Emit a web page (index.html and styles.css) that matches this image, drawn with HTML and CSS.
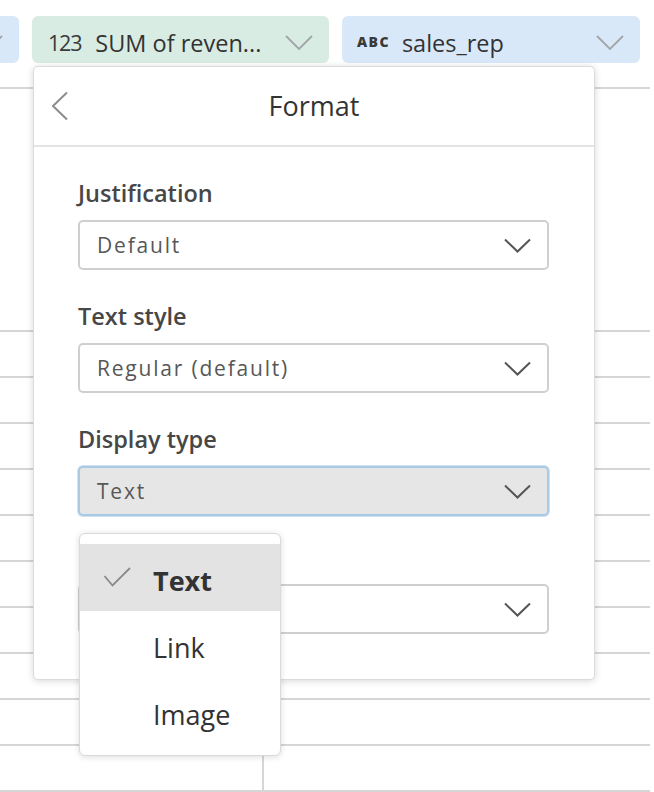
FILE: index.html
```html
<!DOCTYPE html>
<html lang="en">
<head>
<meta charset="utf-8">
<title>Format</title>
<link rel="stylesheet" href="styles.css">
</head>
<body>
<div class="page">
  <div class="toolbar">
    <div class="pill pill-blue pill-cut">
      <svg class="pill-chevron" width="28" height="15" viewBox="0 0 28 15"><polyline points="1,1 14,14 27,1"/></svg>
    </div>
    <div class="pill pill-green">
      <span class="type-num">123</span>
      <span class="pill-label">SUM of reven...</span>
      <svg class="pill-chevron" width="28" height="15" viewBox="0 0 28 15"><polyline points="1,1 14,14 27,1"/></svg>
    </div>
    <div class="pill pill-blue pill-wide">
      <span class="type-abc">ABC</span>
      <span class="pill-label">sales_rep</span>
      <svg class="pill-chevron" width="28" height="15" viewBox="0 0 28 15"><polyline points="1,1 14,14 27,1"/></svg>
    </div>
  </div>

  <div class="table">
    <div class="row row-head"></div>
    <div class="row"></div>
    <div class="row"></div>
    <div class="row"></div>
    <div class="row"></div>
    <div class="row"></div>
    <div class="row"></div>
    <div class="row"></div>
    <div class="row"></div>
    <div class="row"></div>
    <div class="row row-split"><div class="cell cell-first"></div><div class="cell"></div></div>
  </div>

  <div class="popover">
    <div class="popover-header">
      <svg class="back" width="18" height="30" viewBox="0 0 18 30"><polyline points="16,1.5 2,15 16,28.5"/></svg>
      <div class="popover-title">Format</div>
      <div></div>
    </div>
    <div class="popover-body">
      <div class="field">
        <div class="field-label">Justification</div>
        <div class="select">
          <span class="select-value">Default</span>
          <svg class="select-chevron" width="27" height="15" viewBox="0 0 27 15"><polyline points="1,1.5 13.5,13.5 26,1.5"/></svg>
        </div>
      </div>
      <div class="field">
        <div class="field-label">Text style</div>
        <div class="select">
          <span class="select-value">Regular (default)</span>
          <svg class="select-chevron" width="27" height="15" viewBox="0 0 27 15"><polyline points="1,1.5 13.5,13.5 26,1.5"/></svg>
        </div>
      </div>
      <div class="field field-open">
        <div class="field-label">Display type</div>
        <div class="select select-active">
          <span class="select-value">Text</span>
          <svg class="select-chevron" width="27" height="15" viewBox="0 0 27 15"><polyline points="1,1.5 13.5,13.5 26,1.5"/></svg>
        </div>
        <div class="menu">
          <div class="menu-item menu-item-selected">
            <svg class="check" width="28" height="20" viewBox="0 0 28 20"><polyline points="1.5,9 9.5,18.5 27,1"/></svg>
            <span>Text</span>
          </div>
          <div class="menu-item"><span></span><span>Link</span></div>
          <div class="menu-item"><span></span><span>Image</span></div>
        </div>
      </div>
      <div class="field field-last">
        <div class="field-label"></div>
        <div class="select">
          <span class="select-value"></span>
          <svg class="select-chevron" width="27" height="15" viewBox="0 0 27 15"><polyline points="1,1.5 13.5,13.5 26,1.5"/></svg>
        </div>
      </div>
    </div>
  </div>
</div>
</body>
</html>
```

FILE: styles.css
```css
* {
  box-sizing: border-box;
}

html, body {
  margin: 0;
  padding: 0;
  background: #ffffff;
  overflow: hidden;
}

body {
  font-family: "Open Sans", "Noto Sans", sans-serif;
  color: #333333;
}

.page {
  position: relative;
  width: 654px;
  height: 792px;
  overflow: hidden;
}

/* ---------- toolbar pills ---------- */
.toolbar {
  display: flex;
  gap: 13px;
  padding-top: 16px;
}

.pill {
  height: 47px;
  border-radius: 6px;
  display: flex;
  align-items: center;
  padding: 6px 16px 0 15px;
  flex: none;
}

.pill-blue {
  background: #d9e8f9;
}

.pill-green {
  background: #d8ece4;
  width: 297px;
  padding-left: 16px;
}

.pill-cut {
  width: 60px;
  margin-left: -41px;
  justify-content: flex-end;
}

.pill-wide {
  width: 298px;
  padding-left: 15px;
}

.pill-chevron {
  margin-left: auto;
  flex: none;
}

.pill-chevron polyline {
  fill: none;
  stroke: #a2a5a8;
  stroke-width: 1.8;
}

.type-num {
  font-size: 21.5px;
  line-height: 30px;
  letter-spacing: -1.2px;
  color: #3a3a3a;
  margin-right: 14px;
}

.type-abc {
  font-size: 14px;
  font-weight: 800;
  letter-spacing: 1.4px;
  color: #3a3a3a;
  margin-right: 12px;
  line-height: 30px;
  position: relative;
  top: -1px;
}

.pill-label {
  font-size: 23.5px;
  line-height: 30px;
  color: #333;
  white-space: nowrap;
}

/* ---------- background table ---------- */
.table {
  margin-top: 24px;
  width: 650px;
  border-top: 2px solid #d6d6d6;
}

.row {
  height: 46px;
  border-bottom: 2px solid #d6d6d6;
}

.row-head {
  height: 243px;
}

.row-split {
  display: flex;
}

.cell-first {
  width: 264px;
  border-right: 2px solid #d6d6d6;
}

/* ---------- popover ---------- */
.popover {
  position: absolute;
  left: 33px;
  top: 66px;
  width: 562px;
  background: #ffffff;
  border: 1px solid #dcdcdc;
  border-radius: 5px;
  box-shadow: 0 1px 7px rgba(0, 0, 0, 0.16);
}

.popover-header {
  height: 80px;
  border-bottom: 2px solid #e4e4e4;
  display: grid;
  grid-template-columns: 1fr auto 1fr;
  align-items: center;
  padding: 0 17px;
}

.back polyline {
  fill: none;
  stroke: #8c8c8c;
  stroke-width: 2;
}

.popover-title {
  font-size: 27px;
  line-height: 36px;
  color: #333;
}

.popover-body {
  padding: 31px 45px 45px 44px;
}

.field {
  margin-bottom: 31px;
}

.field-open {
  position: relative;
}

.field-last {
  margin-top: -5px;
  margin-bottom: 0;
}

.field-label {
  font-size: 23.5px;
  font-weight: 600;
  line-height: 30px;
  height: 30px;
  color: #474747;
  margin-bottom: 12px;
}

.select {
  height: 50px;
  border: 2px solid #cfcfcf;
  border-radius: 5px;
  display: flex;
  align-items: center;
  padding: 0 16px 0 17px;
  background: #ffffff;
}

.select-active {
  background: #e6e6e6;
  border-color: #a9c9e5;
  box-shadow: 0 0 0 1px rgba(169, 201, 229, 0.55);
}

.select-value {
  font-size: 21px;
  line-height: 28px;
  letter-spacing: 1.8px;
  color: #575757;
}

.select-chevron {
  margin-left: auto;
  flex: none;
}

.select-chevron polyline {
  fill: none;
  stroke: #555555;
  stroke-width: 2;
}

/* ---------- dropdown menu ---------- */
.menu {
  position: absolute;
  left: 1px;
  top: calc(100% + 17px);
  width: 202px;
  background: #ffffff;
  border: 1px solid #dadada;
  border-radius: 6px;
  box-shadow: 0 1px 6px rgba(0, 0, 0, 0.14);
  padding: 10px 0;
  z-index: 2;
}

.menu-item {
  height: 67px;
  display: grid;
  grid-template-columns: 50px auto;
  align-items: start;
  padding: 18px 0 0 23px;
  font-size: 27px;
  line-height: 37px;
  color: #333;
}

.menu-item-selected {
  background: #e3e3e3;
  font-weight: 700;
}

.check {
  margin-top: 5px;
}

.check polyline {
  fill: none;
  stroke: #8a8a8a;
  stroke-width: 1.8;
}
```
